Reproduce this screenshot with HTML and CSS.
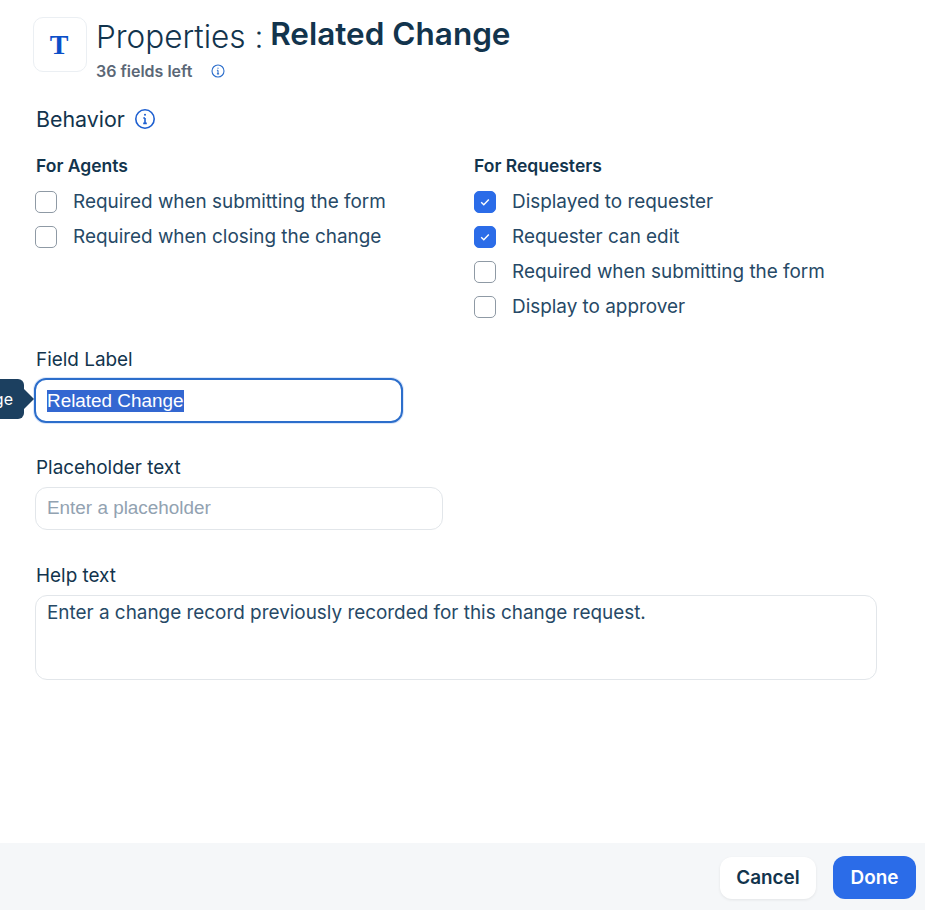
FILE: index.html
```html
<!DOCTYPE html>
<html lang="en">
  <head>
    <meta charset="UTF-8" />
    <title>Field Properties</title>
    <link rel="stylesheet" href="styles.css">
  </head>
  <body>
    <div class="panel">
      <div class="panel-body">
        <header class="props-header">
          <div class="field-icon">T</div>
          <div class="props-title">
            <h1><span class="title-light">Properties :</span> <span class="title-name">Related Change</span></h1>
            <p class="fields-left">
              36 fields left
              <svg class="info-small" viewBox="0 0 14 14" width="14" height="14" fill="none" stroke="#2c6ecb" stroke-width="1.1">
                <circle cx="7" cy="7" r="6" />
                <path d="M7 6.3v3.6M5.9 9.9h2.2M5.9 6.3H7" />
                <circle cx="7" cy="4.2" r="0.6" fill="#2c6ecb" stroke="none" />
              </svg>
            </p>
          </div>
        </header>

        <h2 class="section-title">
          Behavior
          <svg viewBox="0 0 22 22" width="22" height="22" fill="none" stroke="#1d5fd0" stroke-width="1.6">
            <circle cx="11" cy="11" r="9.2" />
            <path d="M11 10v5.4M9.2 15.4h3.6M9.3 10H11" />
            <circle cx="11" cy="6.8" r="1" fill="#1d5fd0" stroke="none" />
          </svg>
        </h2>

        <div class="behavior-grid">
          <div class="behavior-col">
            <h3>For Agents</h3>
            <label class="check-row"><span class="check"></span>Required when submitting the form</label>
            <label class="check-row"><span class="check"></span>Required when closing the change</label>
          </div>
          <div class="behavior-col">
            <h3>For Requesters</h3>
            <label class="check-row">
              <span class="check checked">
                <svg viewBox="0 0 12 12" width="12" height="12" fill="none" stroke="white" stroke-width="1.4"><path d="M2.2 6.2l2.6 2.6 5-5.4" /></svg>
              </span>
              Displayed to requester
            </label>
            <label class="check-row">
              <span class="check checked">
                <svg viewBox="0 0 12 12" width="12" height="12" fill="none" stroke="white" stroke-width="1.4"><path d="M2.2 6.2l2.6 2.6 5-5.4" /></svg>
              </span>
              Requester can edit
            </label>
            <label class="check-row"><span class="check"></span>Required when submitting the form</label>
            <label class="check-row"><span class="check"></span>Display to approver</label>
          </div>
        </div>

        <div class="form-field label-field">
          <div class="field-name">Field Label</div>
          <div class="input-wrap">
            <div class="tooltip">Related Change</div>
            <div class="text-input focused"><span class="selected">Related Change</span></div>
          </div>
        </div>

        <div class="form-field">
          <div class="field-name">Placeholder text</div>
          <div class="text-input placeholder">Enter a placeholder</div>
        </div>

        <div class="form-field help-field">
          <div class="field-name">Help text</div>
          <div class="text-area">Enter a change record previously recorded for this change request.</div>
        </div>
      </div>

      <footer class="panel-footer">
        <button class="btn btn-cancel">Cancel</button>
        <button class="btn btn-done">Done</button>
      </footer>
    </div>
  </body>
</html>
```

FILE: styles.css
```css
body {
  font-family: "Inter", sans-serif;
  margin: 0;
  padding: 0;
  background-color: white;
  color: #12344d;
}

.panel {
  display: flex;
  flex-direction: column;
  height: 910px;
  overflow: hidden;
}

.panel-body {
  flex: 1;
  padding: 17px 48px 0 35px;
}

.props-header {
  display: flex;
  margin-left: -2px;
  gap: 9px;
}

.field-icon {
  box-sizing: content-box;
  width: 50px;
  height: 53px;
  padding-right: 2px;
  border: 1px solid #ebeff3;
  border-radius: 10px;
  display: flex;
  align-items: center;
  justify-content: center;
  font-family: "Liberation Serif", serif;
  font-weight: bold;
  font-size: 28px;
  color: #0b4fc8;
}

.props-title h1 {
  margin: -1px 0 0;
  font-size: 31.5px;
  line-height: 36px;
  font-weight: 400;
}

.title-light {
  font-weight: 300;
}

.title-name {
  font-weight: 600;
  margin-left: -2px;
  vertical-align: 3px;
}

.fields-left {
  margin: 7px 0 0;
  font-size: 16px;
  line-height: 18px;
  font-weight: 600;
  color: #5b6776;
  display: flex;
  align-items: center;
  gap: 19px;
}

.section-title {
  margin: 25px 0 0 1px;
  font-size: 21.4px;
  line-height: 28px;
  font-weight: 400;
  display: flex;
  align-items: center;
  gap: 9px;
}

.behavior-grid {
  display: grid;
  grid-template-columns: 439px 1fr;
  margin-top: 21px;
}

.behavior-col h3 {
  margin: 0 0 6px 1px;
  font-size: 17.5px;
  line-height: 24px;
  font-weight: 600;
}

.behavior-col + .behavior-col h3 {
  margin-left: 0;
}

.check-row {
  display: flex;
  align-items: center;
  gap: 16px;
  height: 35px;
  font-size: 18.9px;
  color: #264966;
}

.check {
  width: 20px;
  height: 20px;
  border: 1px solid #8f9aa5;
  border-radius: 5px;
  background-color: white;
  display: flex;
  align-items: center;
  justify-content: center;
}

.check.checked {
  background-color: #2b6ce8;
  border-color: #2b6ce8;
}

.form-field {
  margin-top: 32px;
}

.label-field {
  margin-top: 23px;
}

.help-field {
  margin-top: 33px;
}

.field-name {
  font-size: 18.9px;
  line-height: 26px;
  margin-bottom: 6px;
  margin-left: 1px;
}

.label-field .field-name {
  margin-bottom: 5px;
}

.input-wrap {
  position: relative;
}

.text-input {
  box-sizing: border-box;
  width: 408px;
  height: 43px;
  padding: 0 11px;
  border: 1px solid #e2e6ea;
  border-radius: 12px;
  display: flex;
  align-items: center;
  font-family: "Liberation Sans", sans-serif;
  font-size: 18.9px;
}

.text-input.focused {
  width: 369px;
  height: 45px;
  margin-left: -1px;
  border: 2px solid #2c6ecb;
  box-shadow: 0 0 0 1px #dbe7fb;
}

.text-input.placeholder {
  padding-bottom: 1px;
  color: #92a2b1;
}

.selected {
  background-color: #3367d1;
  color: white;
  line-height: 22px;
}

.text-area {
  box-sizing: border-box;
  height: 85px;
  padding: 5px 11px;
  border: 1px solid #e2e6ea;
  border-radius: 12px;
  font-size: 18.9px;
  line-height: 24px;
  color: #264966;
}

.tooltip {
  position: absolute;
  right: calc(100% + 11px);
  top: 1px;
  height: 40px;
  padding: 0 11px;
  background-color: #1c4060;
  color: white;
  border-radius: 6px;
  display: flex;
  align-items: center;
  font-size: 16px;
  white-space: nowrap;
}

.tooltip::after {
  content: "";
  position: absolute;
  left: 100%;
  top: 10px;
  border-style: solid;
  border-width: 10px 0 10px 10px;
  border-color: transparent transparent transparent #1c4060;
}

.panel-footer {
  height: 67px;
  box-sizing: border-box;
  padding-top: 2px;
  background-color: #f5f7f9;
  display: flex;
  justify-content: flex-end;
  align-items: center;
  gap: 17px;
  padding-right: 9px;
}

.btn {
  font-family: "Inter", sans-serif;
  font-size: 18.9px;
  font-weight: 600;
  height: 42px;
  border: none;
  border-radius: 12px;
  cursor: pointer;
}

.btn-cancel {
  width: 96px;
  background-color: white;
  color: #12344d;
  box-shadow: 0 1px 3px rgba(0, 0, 0, 0.08);
}

.btn-done {
  width: 83px;
  height: 43px;
  background-color: #2b6ce8;
  color: white;
}
```
